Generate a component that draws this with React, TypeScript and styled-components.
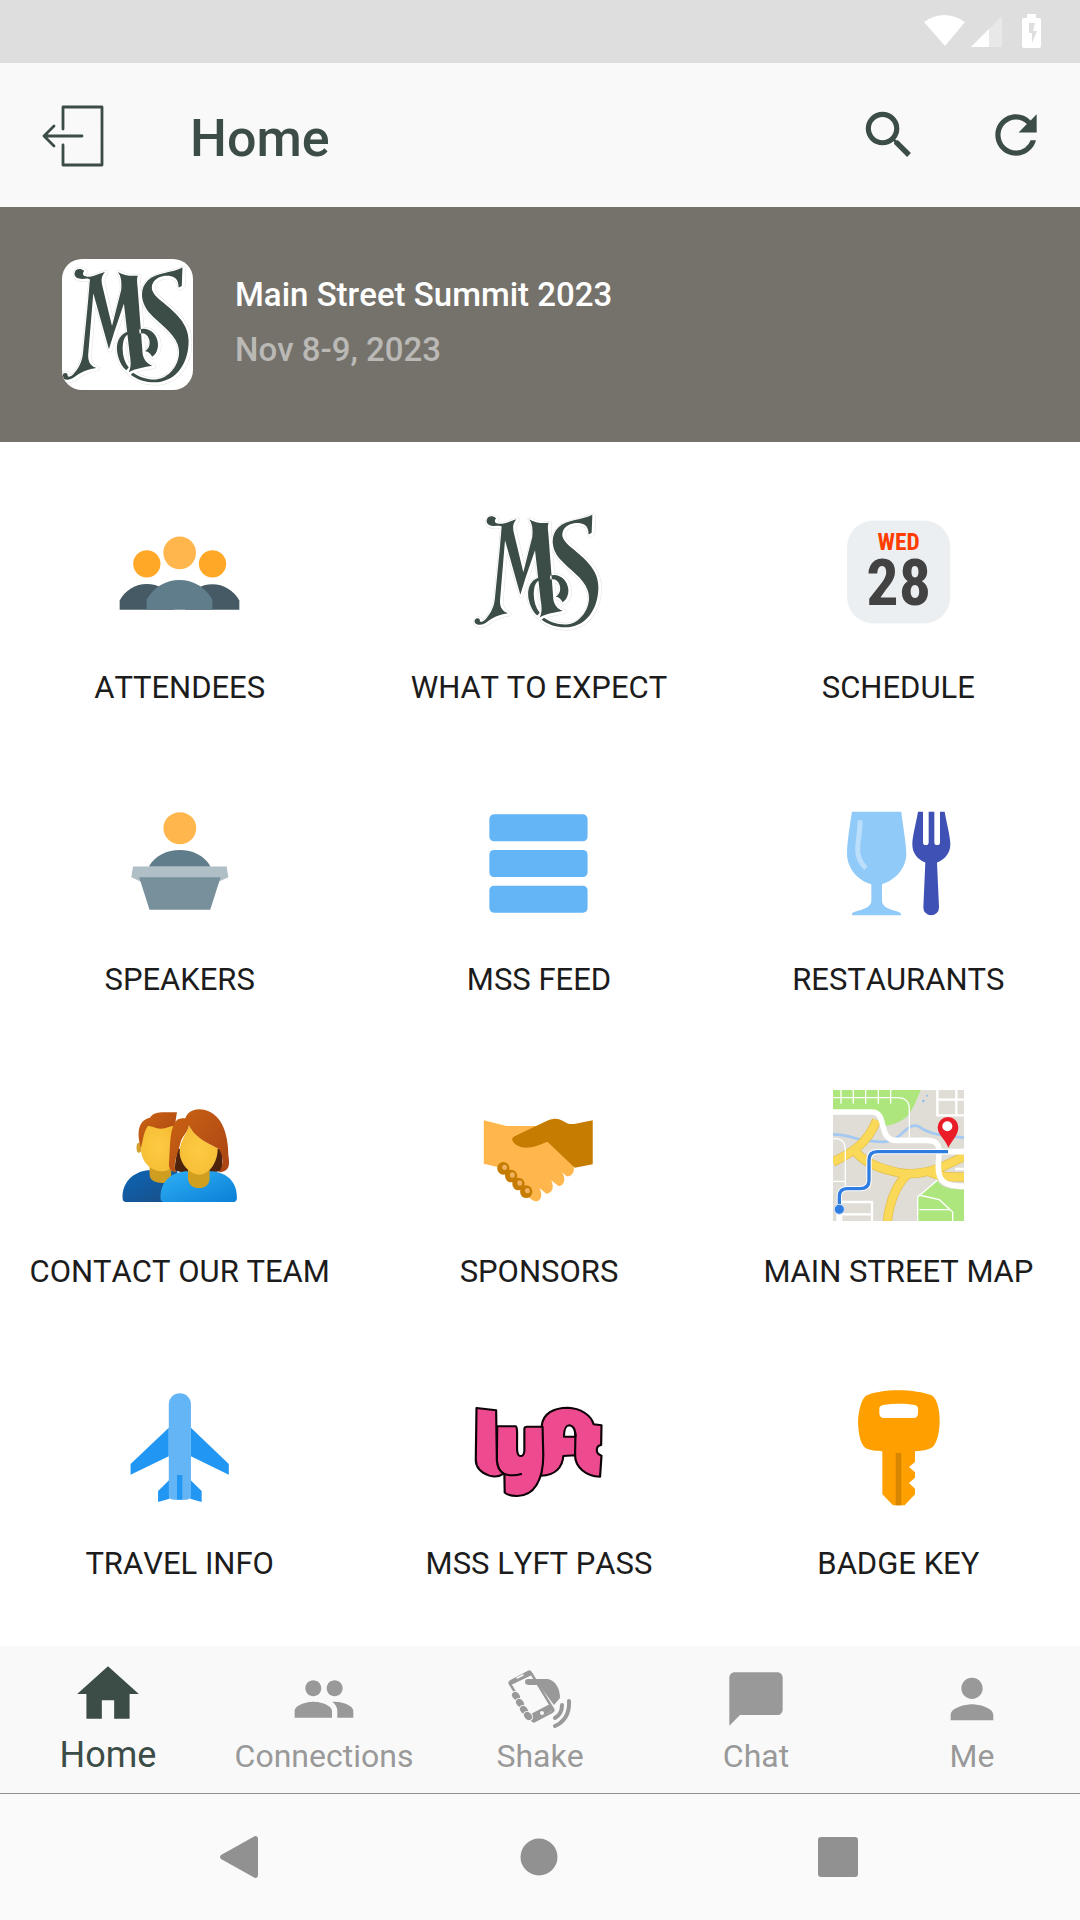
import React from 'react';
import styled, { createGlobalStyle } from 'styled-components';
import { MdSearch, MdRefresh, MdHome, MdPeople, MdChatBubble, MdPerson } from 'react-icons/md';

const green = '#3c4c46';
const grey = '#999999';

const GlobalStyle = createGlobalStyle`
  * { box-sizing: border-box; }
  body { margin: 0; background: #ffffff; font-family: Roboto, "Noto Sans", sans-serif; font-kerning: none; }
  button { margin: 0; padding: 0; border: 0; background: none; font: inherit; font-kerning: none; color: inherit; cursor: pointer; }
  a { color: inherit; text-decoration: none; }
  svg { display: block; flex: none; }
`;

const Screen = styled.div`
  display: flex;
  flex-direction: column;
  min-height: 100vh;
`;

const StatusBar = styled.div`
  display: flex;
  align-items: center;
  justify-content: flex-end;
  height: 63px;
  padding-right: 38px;
  background: #dedede;
`;

const AppBar = styled.header`
  display: flex;
  align-items: center;
  height: 144px;
  padding: 0 33px 0 42px;
  background: #f9f9f9;
  color: ${green};
`;

const Title = styled.h1`
  flex: 1;
  margin: 0 0 0 84px;
  font-size: 52px;
  line-height: 64px;
  font-weight: 500;
  padding-top: 8px;
`;

const Actions = styled.div`
  display: flex;
  gap: 65px;
`;

const Banner = styled.section`
  display: flex;
  align-items: center;
  gap: 42px;
  height: 235px;
  padding: 0 62px;
  background: #75726b;
`;

const EventText = styled.div`
  padding-bottom: 6px;
`;

const Badge = styled.div`
  width: 131px;
  height: 131px;
  border-radius: 20px;
  overflow: hidden;
  background: #ffffff;
`;

const EventName = styled.h2`
  margin: 0;
  font-size: 33px;
  line-height: 55px;
  font-weight: 500;
  color: #ffffff;
`;

const EventDate = styled.p`
  margin: 0;
  font-size: 33px;
  line-height: 55px;
  font-weight: 500;
  color: #bab9b6;
`;

const Grid = styled.main`
  flex: 1;
  display: grid;
  grid-template-columns: repeat(3, 1fr);
  align-content: start;
  padding: 0 2px 36px 0;
`;

const Tile = styled.a`
  display: flex;
  flex-direction: column;
  align-items: center;
  gap: 31px;
  height: 292px;
  padding-top: 64px;
  font-size: 31px;
  line-height: 40px;
  color: #1c1c1c;
  white-space: nowrap;
`;

const Tabs = styled.nav`
  display: grid;
  grid-template-columns: repeat(5, 1fr);
  height: 148px;
  padding-top: 11px;
  background: #f9f9f9;
  border-bottom: 1px solid #8f8f8f;
`;

const Tab = styled.button<{ $active?: boolean }>`
  display: flex;
  flex-direction: column;
  align-items: center;
  color: ${(p) => (p.$active ? green : grey)};
  font-size: ${(p) => (p.$active ? 36 : 32)}px;
  line-height: ${(p) => (p.$active ? 48 : 50)}px;
`;

const TabIcon = styled.span`
  display: flex;
  align-items: flex-end;
  height: 74px;
`;

const SystemNav = styled.nav`
  display: grid;
  grid-template-columns: repeat(3, 1fr);
  height: 126px;
  padding: 0 92px 0 90px;
  background: #fafafa;
`;

const SystemButton = styled.button`
  display: flex;
  align-items: center;
  justify-content: center;
  color: #919191;
`;

type ArtProps = { box: string; children: React.ReactNode };

const Art = ({ box, children }: ArtProps) => (
  <svg width="131" height="131" viewBox={box} preserveAspectRatio="none" aria-hidden="true">
    {children}
  </svg>
);

const monogram = [
  'M200 87C180 93 165 102 148 101C138 100 131 95 139 84C128 74 112 78 111 91C110 104 124 109 142 107C148 106 153 106 156 109L150 180L136 322C134 345 128 362 112 382C105 392 96 398 90 393C93 385 84 381 77 387C71 394 77 405 91 404C104 403 112 395 122 388C136 378 152 373 175 369C160 364 150 354 151 330L166 150L212 314L228 262L256 180L273 330C277 355 277 368 270 382C290 370 315 368 340 362C325 358 314 345 311 328L296 130C294 112 294 105 297 98C275 100 255 97 238 87C247 98 250 112 248 140L221 246L193 130C188 108 190 100 200 87Z',
  'M428 74C400 90 350 88 326 112C300 138 306 178 330 206C360 240 400 262 414 300C430 345 395 400 350 403C322 404 298 394 283 383L276 389C300 408 335 415 365 410C420 398 447 345 446 288C445 240 410 210 375 180C345 156 330 140 342 118C352 100 385 92 405 104C414 110 416 120 417 133L426 128Z',
  'M267 262C240 272 230 300 238 332C243 352 252 368 263 376L270 368C256 350 250 325 253 300C254 285 260 275 268 270Z',
  'M301 256C330 248 354 270 356 298C357 315 350 330 339 336C333 325 325 320 318 320C330 312 334 300 330 285C325 270 315 265 302 268Z',
].join('');

const Monogram = ({ box }: { box: string }) => (
  <Art box={box}>
    <path d={monogram} transform="translate(3 2)" fill="none" stroke="#e2e2e2" strokeWidth="15" strokeLinejoin="round" />
    <path d={monogram} transform="translate(3 2)" fill="#fff" stroke="#fff" strokeWidth="12" strokeLinejoin="round" />
    <path d={monogram} fill={green} />
  </Art>
);

const Attendees = () => (
  <Art box="102 16.5 393 393">
    <circle cx="200.5" cy="190" r="41" fill="#ffa726" />
    <circle cx="397.5" cy="190" r="41" fill="#ffa726" />
    <path d="M119 328V300A92 92 0 0 1 282 300V328Z" fill="#455a64" />
    <path d="M316 328V300A92 92 0 0 1 478 300V328Z" fill="#455a64" />
    <circle cx="299" cy="157" r="49" fill="#ffb74d" />
    <path d="M200 328V297A112 112 0 0 1 397 297V328Z" fill="#607d8b" />
  </Art>
);

const Calendar = () => (
  <Art box="99 46.5 393 393">
    <rect x="141" y="90" width="310" height="309" rx="80" fill="#eceff1" />
    <g fontFamily='"Roboto Condensed", "Liberation Sans Narrow", Roboto, sans-serif' fontWeight="700" textAnchor="middle">
      <text x="296" y="179" fontSize="70" fill="#ff3d00">WED</text>
      <text x="296" y="342" fontSize="192" fill="#424242">28</text>
    </g>
  </Art>
);

const Speakers = () => (
  <Art box="94.6 53.5 366.8 393">
    <ellipse cx="279" cy="144" rx="46" ry="48" fill="#ffb74d" />
    <path d="M192 260C225 193 333 193 365 260Z" fill="#607d8b" />
    <path d="M148 259H410L415 291L387 305H170L143 291Z" fill="#b0bec5" />
    <path d="M165 291H393L364 389H194Z" fill="#78909c" />
  </Art>
);

const Feed = () => (
  <Art box="1100.2 54 366.8 393">
    {[103, 210, 317].map((y) => (
      <rect key={y} x="1146" y={y} width="275" height="81" rx="13" ry="14" fill="#64b5f6" />
    ))}
  </Art>
);

const Restaurants = () => (
  <Art box="99 923.5 393 393">
    <path d="M156 965H304C306 990 319 1060 319 1090C319 1135 285 1170 246 1182V1232C246 1262 303 1260 303 1272V1275H156V1272C156 1260 214 1262 214 1232V1182C175 1172 141 1135 141 1090C141 1060 150 1000 156 965Z" fill="#90caf9" />
    <path d="M180 990C180 1030 172 1060 173 1083C175 1105 185 1122 198 1134" fill="none" stroke="#bbdefb" strokeWidth="15" />
    <path d="M354 965H369V1056A8.500 8.500 0 0 0 386 1056V965H403V1056A8.500 8.500 0 0 0 420 1056V965H434C440 1000 451 1040 451 1063C451 1088 435 1108 411 1117L417 1252A23.500 23.500 0 0 1 370 1252L376 1117C352 1108 337 1088 337 1063C337 1040 348 1000 354 965Z" fill="#3f51b5" />
  </Art>
);

const Team = () => (
  <Art box="229.8 59 321 393">
    <defs>
      <radialGradient id="face"><stop offset="0" stopColor="#ffca44" /><stop offset="1" stopColor="#f6bf36" /></radialGradient>
      <linearGradient id="hair" x1="0" y1="0" x2="1" y2="1"><stop offset="0" stopColor="#cb6412" /><stop offset="1" stopColor="#a94314" /></linearGradient>
      <linearGradient id="navy" x1="0" y1="0" x2="1" y2="1"><stop offset="0" stopColor="#0b65b5" /><stop offset="1" stopColor="#1b4e86" /></linearGradient>
      <linearGradient id="sky" x1="0" y1="0" x2="1" y2="1"><stop offset="0" stopColor="#2fb0f5" /><stop offset="1" stopColor="#0a7fd6" /></linearGradient>
    </defs>
    <path d="M251 385C248 330 285 300 318 300H385V395H262Q251 395 251 385Z" fill="url(#navy)" />
    <path d="M317 290H370V335C345 342 317 338 317 312Z" fill="#cf9e20" />
    <ellipse cx="291" cy="232" rx="6" ry="15" fill="#d8a02a" />
    <path d="M303 165C298 200 294 240 298 255C305 285 325 302 345 303C360 303 370 295 380 280V160Z" fill="url(#face)" />
    <path d="M296 232C285 190 288 150 318 142C325 128 340 126 350 126H384L381 150L380 168C370 163 360 176 344 175C330 175 322 166 313 167C303 180 300 215 296 232Z" fill="url(#hair)" />
    <path d="M385 235H495V300C480 308 460 305 440 305C400 308 382 305 378 295Z" fill="#4d230b" />
    <path d="M344 385C342 330 375 303 410 303H465C500 303 533 330 531 385Q530 395 520 395H355Q344 395 344 385Z" fill="url(#sky)" />
    <path d="M411 285V325C413 345 425 353 438 353C452 353 464 343 464 325V285Z" fill="#d19f20" />
    <path d="M413 165C425 195 455 218 484 233C484 275 465 312 438 313C410 312 388 270 391 240C392 210 410 190 413 165Z" fill="url(#face)" />
    <path d="M413 165C412 185 395 200 392 220C388 245 372 280 382 306C365 304 363 290 365 270C368 230 365 170 385 148C395 142 400 145 405 143C410 125 425 117 438 117C480 117 510 165 510 255C515 290 510 305 486 306C500 290 497 250 486 235C450 215 425 195 413 165Z" fill="url(#hair)" />
  </Art>
);

const Handshake = () => (
  <Art box="1110.6 59 321 393">
    <path d="M1137 150L1193 167H1290L1356 285C1362 303 1352 320 1340 318L1329 306C1340 328 1332 347 1320 347L1302 330C1311 352 1304 370 1290 370L1273 352C1282 372 1278 392 1265 393C1258 393 1250 384 1245 378L1170 290L1137 280Z" fill="#ffb74d" />
    <path d="M1404 150V282L1360 292L1293 214L1268 226C1245 236 1215 235 1207 210C1205 200 1212 198 1225 190L1295 150C1310 143 1322 144 1332 153C1345 163 1352 162 1362 160Z" fill="#c67c00" />
    {[[1185, 294], [1204, 317], [1222, 341], [1241, 364]].map(([x, y]) => (
      <g key={x}>
        <ellipse cx={x} cy={y} rx="15" ry="19" fill="#c67c00" />
        <ellipse cx={x + 3} cy={y - 3} rx="6" ry="8" fill="#f0b060" />
      </g>
    ))}
  </Art>
);

const StreetMap = () => (
  <Art box="249 59 393 393">
    <rect x="249" y="59" width="393" height="393" fill="#dfddd6" />
    <path d="M249 59H512C500 90 485 125 470 140C450 155 425 165 400 168L375 125H249Z" fill="#ace67c" />
    <path d="M502 380L562 330C570 350 600 358 642 358V452H502Z" fill="#ace67c" />
    <path d="M249 192C300 192 320 210 360 212C390 215 420 220 450 195C470 175 485 160 505 168C530 185 550 195 642 202" fill="none" stroke="#a3c9f3" strokeWidth="8" />
    <g fill="none" stroke="#e3bd4e" strokeWidth="28">
      <path d="M249 275C300 250 350 225 380 150M318 245C350 285 410 300 460 310M412 452C420 390 440 340 475 310M450 308C530 318 590 285 642 258M540 306C570 320 600 320 642 320" />
    </g>
    <g fill="none" stroke="#f9d957" strokeWidth="24">
      <path d="M249 275C300 250 350 225 380 150M318 245C350 285 410 300 460 310M412 452C420 390 440 340 475 310M450 308C530 318 590 285 642 258M540 306C570 320 600 320 642 320" />
    </g>
    <g fill="none" stroke="#fff">
      <path d="M249 125H365C415 125 380 210 440 210H530C580 210 565 245 565 290C565 330 580 348 642 348M565 244H642" strokeWidth="17" />
      <path d="M249 82H440C470 82 478 95 478 120V202M273 59V100M310 59V100M347 59V100M385 59V100M422 59V100M249 205C275 203 286 215 286 240V350M249 333H286M503 452V380L562 330M506 374L568 388L608 425V452M508 418H600" strokeWidth="4" />
      <path d="M562 59V135H642M619 59V135M562 88H642M275 395H366V452M270 432H366M615 296H642" strokeWidth="7" />
      <path d="M268 452V420" strokeWidth="18" />
      <path d="M268 415V380C268 365 275 355 290 355H330C350 355 357 345 357 330V270C357 253 365 244 382 244H594" strokeWidth="16" />
    </g>
    <path d="M268 415V380C268 365 275 355 290 355H330C350 355 357 345 357 330V270C357 253 365 244 382 244H594" fill="none" stroke="#2f7de1" strokeWidth="10" />
    <circle cx="268" cy="417" r="15" fill="#2f7de1" stroke="#d6e4f8" strokeWidth="3" />
    <path d="M595 232C585 205 563 195 563 171A31 31 0 0 1 625 171C625 195 606 210 595 232Z" fill="#ea1c27" />
    <circle cx="592" cy="168" r="15" fill="#fff" />
    <circle cx="520" cy="92" r="4" fill="#93bcee" />
    <circle cx="531" cy="76" r="3" fill="#93bcee" />
  </Art>
);

const Plane = () => (
  <Art box="122.600 35 366.800 393">
    <path d="M276 172L169 281V313L276 258ZM338 172L444 281V313L338 258ZM278 328L246 362V395L278 385ZM336 328L368 362V395L336 385Z" fill="#2196f3" />
    <path d="M276 102A31 33 0 0 1 338 102V375Q338 388 325 388H289Q276 388 276 375Z" fill="#64b5f6" />
    <rect x="299" y="314" width="15" height="74" fill="#2196f3" />
  </Art>
);

const Lyft = () => (
  <Art box="1129.200 35 366.800 393">
    <g fill="#ee4a8f" stroke="#0c0207" strokeWidth="6" strokeLinejoin="round" strokeLinecap="round">
      <path d="M1322 165C1325 130 1355 112 1395 112C1430 113 1460 135 1467 162L1489 165L1488 224C1473 226 1470 250 1489 256L1485 319C1445 318 1415 290 1415 255L1382 257C1380 290 1360 315 1320 316Z" />
      <path d="M1197 168H1248C1256 168 1251 215 1253 243C1256 262 1270 262 1273 243V176Q1273 169 1281 169H1324L1326 255C1326 330 1300 377 1253 377C1238 377 1225 374 1218 367L1217 311C1203 303 1196 290 1196 270Z" />
      <path d="M1139 113L1194 120L1196 270C1197 290 1205 303 1215 310C1202 320 1188 320 1175 316C1150 306 1137 290 1137 268Z" />
      <path d="M1217 311C1235 317 1250 316 1264 311" fill="none" />
      <path d="M1384 199C1384 175 1388 165 1400 165C1413 167 1416 180 1416 199Z" fill="#fff" />
      <path d="M1416 190L1415 257" fill="none" />
    </g>
  </Art>
);

const Key = () => (
  <Art box="129 35 393 393">
    <path fillRule="evenodd" d="M325 60C365 60 400 66 425 75C445 88 450 130 449 160C447 190 440 225 422 234C405 241 390 242 375 243V275L357 290L375 306V322L357 338L375 355V372L344 405H309L277 372V243C260 242 240 240 228 234C212 225 205 190 204 155C205 120 215 85 228 76C250 66 285 60 325 60ZM279 104C310 99 345 99 374 104Q384 107 384 115V128Q384 143 370 143H282Q268 143 268 128V112Q270 106 279 104Z" fill="#ffa000" />
    <path d="M317 248H334V405H317Z" fill="#d68600" />
  </Art>
);

const ShakeIcon = () => (
  <svg width="64" height="64" viewBox="0 0 64 64" fill="currentColor" aria-hidden="true">
    <path d="M2 17Q1 15 3 14L20 5Q22 4 23 6L45 42Q46 44 44 45L27 54Q25 55 24 53Z" fill="#f9f9f9" stroke="currentColor" strokeWidth="2.500" />
    <path d="M3 18L2 14L21 4L24 8Z" />
    <path d="M21 48L42 37L45 43L26 54Z" />
    <path d="M9 11L15 8" stroke="#f9f9f9" strokeWidth="1.500" strokeLinecap="round" />
    <circle cx="34" cy="46" r="2" fill="#f9f9f9" />
    <path d="M20 12H40C48 14 52 22 52 31L46 38L31 18H21Q17 18 17 15Q17 12 20 12Z" />
    <g stroke="#f9f9f9" strokeWidth="1">
      <ellipse cx="8" cy="29" rx="5" ry="4" transform="rotate(50 8 29)" />
      <ellipse cx="12" cy="36" rx="5" ry="4" transform="rotate(50 12 36)" />
      <ellipse cx="16" cy="43" rx="5" ry="4" transform="rotate(50 16 43)" />
      <ellipse cx="20" cy="49" rx="5" ry="4" transform="rotate(50 20 49)" />
    </g>
    <path d="M54 38Q54 47 47 51M61 34Q62 52 47 59" fill="none" stroke="currentColor" strokeWidth="4" strokeLinecap="round" />
  </svg>
);

const tiles: { label: string; icon: React.ReactNode }[] = [
  { label: 'ATTENDEES', icon: <Attendees /> },
  { label: 'WHAT TO EXPECT', icon: <Monogram box="70 47.5 393 393" /> },
  { label: 'SCHEDULE', icon: <Calendar /> },
  { label: 'SPEAKERS', icon: <Speakers /> },
  { label: 'MSS FEED', icon: <Feed /> },
  { label: 'RESTAURANTS', icon: <Restaurants /> },
  { label: 'CONTACT OUR TEAM', icon: <Team /> },
  { label: 'SPONSORS', icon: <Handshake /> },
  { label: 'MAIN STREET MAP', icon: <StreetMap /> },
  { label: 'TRAVEL INFO', icon: <Plane /> },
  { label: 'MSS LYFT PASS', icon: <Lyft /> },
  { label: 'BADGE KEY', icon: <Key /> },
];

const tabs: { label: string; icon: React.ReactNode }[] = [
  { label: 'Home', icon: <MdHome size={74} /> },
  { label: 'Connections', icon: <MdPeople size={64} /> },
  { label: 'Shake', icon: <ShakeIcon /> },
  { label: 'Chat', icon: <MdChatBubble size={64} /> },
  { label: 'Me', icon: <MdPerson size={64} /> },
];

export default function App() {
  return (
    <Screen>
      <GlobalStyle />
      <StatusBar>
        <svg width="120" height="36" viewBox="0 0 120 36" fill="#fff" aria-hidden="true">
          <path d="M2 8Q22 -6 43 8L23 32Z" />
          <path d="M80 2V33H49Z" opacity="0.3" />
          <path d="M67 15V33H49Z" />
          <path fillRule="evenodd" d="M105 0H114V4H117Q119 4 119 6V32Q119 34 117 34H102Q100 34 100 32V6Q100 4 102 4H105ZM113 9H107V19H110V29L115 17H111Z" />
        </svg>
      </StatusBar>
      <AppBar>
        <button aria-label="Exit event">
          <svg width="64" height="64" viewBox="0 -2 64 64" fill="none" stroke="currentColor" strokeWidth="2.800" strokeLinecap="round" strokeLinejoin="round" aria-hidden="true">
            <path d="M21 24V2H60V60H21V40M2 31H40M12 21L2 31L12 41" />
          </svg>
        </button>
        <Title>Home</Title>
        <Actions>
          <button aria-label="Search"><MdSearch size={62} /></button>
          <button aria-label="Refresh"><MdRefresh size={62} /></button>
        </Actions>
      </AppBar>
      <Banner>
        <Badge><Monogram box="74 49 385 385" /></Badge>
        <EventText>
          <EventName>Main Street Summit 2023</EventName>
          <EventDate>Nov 8-9, 2023</EventDate>
        </EventText>
      </Banner>
      <Grid>
        {tiles.map((t) => (
          <Tile key={t.label} href="#">
            {t.icon}
            <span>{t.label}</span>
          </Tile>
        ))}
      </Grid>
      <Tabs>
        {tabs.map((t, i) => (
          <Tab key={t.label} $active={i === 0}>
            <TabIcon>{t.icon}</TabIcon>
            <span>{t.label}</span>
          </Tab>
        ))}
      </Tabs>
      <SystemNav>
        <SystemButton aria-label="Back">
          <svg width="42" height="44" viewBox="0 0 42 44" fill="currentColor" aria-hidden="true"><path d="M2 20Q0 22 2 24L36 43Q39 43 39 40V4Q39 1 36 1Z" /></svg>
        </SystemButton>
        <SystemButton aria-label="Home screen">
          <svg width="38" height="38" viewBox="0 0 38 38" fill="currentColor" aria-hidden="true"><circle cx="19" cy="19" r="18.500" /></svg>
        </SystemButton>
        <SystemButton aria-label="Recent apps">
          <svg width="40" height="40" viewBox="0 0 40 40" fill="currentColor" aria-hidden="true"><rect width="40" height="40" rx="3" /></svg>
        </SystemButton>
      </SystemNav>
    </Screen>
  );
}
